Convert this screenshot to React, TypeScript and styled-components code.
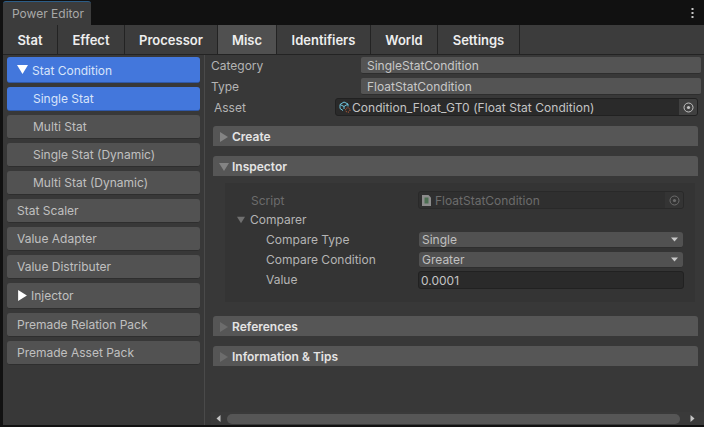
import styled, { createGlobalStyle } from "styled-components";

const GlobalStyle = createGlobalStyle`
  html, body {
    margin: 0;
    padding: 0;
    background: #111111;
    overflow: hidden;
  }
  * {
    box-sizing: border-box;
  }
`;

const Window = styled.div`
  display: flex;
  flex-direction: column;
  width: 704px;
  height: 427px;
  padding: 0 0 2px 3px;
  font-family: Inter, "Liberation Sans", sans-serif;
  font-size: 12px;
  line-height: 16px;
  color: #c4c4c4;
  background: #111111;
`;

const TitleBar = styled.div`
  display: flex;
  justify-content: space-between;
  align-items: flex-end;
  height: 25px;
  flex: none;
`;

const TitleTab = styled.div`
  width: 88px;
  height: 24px;
  padding: 4px 0 0 9px;
  color: #a8a8a8;
  background: #3c3c3c;
  border-top: 1px solid #2c5d87;
  border-radius: 3px 3px 0 0;
`;

const MenuDots = styled.svg`
  margin: 0 10px 6px 0;
`;

const Body = styled.div`
  display: flex;
  flex-direction: column;
  flex: 1;
  min-height: 0;
  background: #383838;
`;

const TabBar = styled.div`
  display: flex;
  flex: none;
  height: 30px;
  background: #3c3c3c;
  border-bottom: 1px solid #232323;
`;

const Tab = styled.div<{ $active?: boolean; $width: number }>`
  display: flex;
  align-items: center;
  justify-content: center;
  width: ${p => p.$width}px;
  font-size: 13px;
  font-weight: 600;
  color: #eeeeee;
  background: ${p => (p.$active ? "#505050" : "#3c3c3c")};
  border-right: 1px solid #232323;
`;

const Columns = styled.div`
  display: flex;
  flex: 1;
  min-height: 0;
`;

const Sidebar = styled.div`
  display: flex;
  flex-direction: column;
  flex: none;
  gap: 4px;
  width: 202px;
  padding: 2px 0 0 4px;
  border-right: 1px solid #4a4a4a;
`;

const SideButton = styled.div<{ $selected?: boolean; $tall?: boolean; $child?: boolean }>`
  display: flex;
  align-items: center;
  flex: none;
  gap: 4px;
  width: 193px;
  height: ${p => (p.$tall ? 26 : 24)}px;
  padding-left: ${p => (p.$child ? 26 : 10)}px;
  color: ${p => (p.$selected ? "#d8e4fa" : "#c0c0c0")};
  background: ${p => (p.$selected ? "#4377dc" : "#525252")};
  border-bottom: 1px solid ${p => (p.$selected ? "#2f58a8" : "#2e2e2e")};
  border-radius: 3px;
`;

const ConditionLabel = styled.span`
  padding-top: 2px;
`;

const InjectorLabel = styled.span`
  margin-left: -1px;
`;

const Content = styled.div`
  display: flex;
  flex-direction: column;
  flex: 1;
  min-width: 0;
`;

const Scroller = styled.div`
  display: flex;
  flex-direction: column;
  flex: 1;
  min-height: 0;
  padding: 2px 3px 0 6px;
`;

const NameRow = styled.div`
  display: flex;
  align-items: center;
  height: 17px;
  margin-bottom: 4px;
`;

const RowLabel = styled.div`
  width: 150px;
  flex: none;
  color: #b4b4b4;
`;

const TextField = styled.div`
  flex: 1;
  height: 17px;
  padding: 0 6px;
  line-height: 17px;
  color: #c8c8c8;
  background: #545454;
  border-bottom: 1px solid #2e2e2e;
  border-radius: 2px;
`;

const AssetRow = styled.div`
  display: flex;
  align-items: center;
  height: 18px;
  margin: -1px 3px 0;
`;

const AssetLabel = styled.div`
  width: 121px;
  flex: none;
  padding-top: 2px;
  color: #b4b4b4;
`;

const ObjectField = styled.div<{ $dim?: boolean }>`
  display: flex;
  align-items: center;
  flex: 1;
  height: 18px;
  padding-left: 3px;
  gap: 1px;
  color: ${p => (p.$dim ? "#6c6c6c" : "#c4c4c4")};
  background: ${p => (p.$dim ? "#2f2f2f" : "#2a2a2a")};
  border: 1px solid ${p => (p.$dim ? "#292929" : "#212121")};
  border-radius: 3px;
`;

const ObjectName = styled.span<{ $dim?: boolean }>`
  flex: 1;
  white-space: nowrap;
  padding-top: 2px;
  letter-spacing: ${p => (p.$dim ? "0" : "0.05px")};
  padding-left: ${p => (p.$dim ? "3px" : "0")};
`;

const PickerButton = styled.div<{ $dim?: boolean }>`
  display: flex;
  align-items: center;
  justify-content: center;
  flex: none;
  width: 18px;
  height: 16px;
  background: ${p => (p.$dim ? "#343434" : "#404040")};
  border-radius: 0 2px 2px 0;
`;

const Foldout = styled.div<{ $top: number }>`
  display: flex;
  align-items: center;
  flex: none;
  gap: 3px;
  height: 20px;
  margin: ${p => p.$top}px 3px 0 2px;
  padding: 2px 0 0 6px;
  font-weight: 600;
  color: #e4e4e4;
  background: #565656;
  border-radius: 3px 3px 0 0;
`;

const InspectorBox = styled.div`
  display: flex;
  flex-direction: column;
  height: 119px;
  margin: 7px 6px 0 14px;
  padding: 8px 11px 0 0;
  background: #343434;
`;

const ScriptRow = styled.div`
  display: flex;
  align-items: center;
  height: 18px;
`;

const ScriptLabel = styled.div`
  width: 193px;
  flex: none;
  padding: 2px 0 0 26px;
  color: #6c6c6c;
`;

const ComparerRow = styled.div`
  display: flex;
  align-items: center;
  gap: 5px;
  height: 16px;
  margin-top: 3px;
  margin-bottom: 2px;
  padding-left: 12px;
  color: #b4b4b4;
`;

const PropertyRow = styled.div`
  display: flex;
  align-items: center;
  height: 20px;
`;

const PropertyLabel = styled.div`
  width: 194px;
  flex: none;
  padding-left: 41px;
  color: #b4b4b4;
`;

const Dropdown = styled.div`
  display: flex;
  align-items: center;
  justify-content: space-between;
  flex: 1;
  height: 16px;
  margin-right: 1px;
  padding: 0 5px 0 3px;
  color: #c0c0c0;
  background: #515151;
  border-bottom: 1px solid #2e2e2e;
  border-radius: 3px;
`;

const NumberField = styled.div`
  flex: 1;
  height: 18px;
  margin-left: -1px;
  padding-left: 2px;
  line-height: 17px;
  color: #c4c4c4;
  background: #2a2a2a;
  border: 1px solid #212121;
  border-radius: 3px;
`;

const ScrollBar = styled.div`
  display: flex;
  align-items: center;
  flex: none;
  height: 13px;
  margin-left: 6px;
  padding: 0 8px 0 4px;
  background: #3a3a3a;
`;

const ThumbTrack = styled.div`
  flex: 1;
  height: 10px;
  margin: 0 9px 0 5px;
  background: #565656;
  border-radius: 5px;
`;

const tabs = [
  { name: "Stat", width: 55 },
  { name: "Effect", width: 67 },
  { name: "Processor", width: 93 },
  { name: "Misc", width: 59, active: true },
  { name: "Identifiers", width: 94 },
  { name: "World", width: 67 },
  { name: "Settings", width: 82 },
];

function Arrow({ dir, color, size }: { dir: "right" | "down"; color: string; size: number }) {
  const points = {
    right: "1,0 9,5 1,10",
    down: "0,1 10,1 5,9",
  };
  return (
    <svg width={size} height={size} viewBox="0 0 10 10">
      <polygon points={points[dir]} fill={color} />
    </svg>
  );
}

function ScrollArrow({ dir }: { dir: "left" | "right" }) {
  return (
    <svg width="7" height="7" viewBox="0 0 7 7">
      <polygon points={dir === "left" ? "5.5,0 1.5,3.5 5.5,7" : "1.5,0 5.5,3.5 1.5,7"} fill="#c4c4c4" />
    </svg>
  );
}

function PickerIcon({ color }: { color: string }) {
  return (
    <svg width="11" height="11" viewBox="0 0 11 11" fill="none">
      <circle cx="5.5" cy="5.5" r="4.5" stroke={color} strokeWidth="1" />
      <circle cx="5.5" cy="5.5" r="1.6" fill={color} />
    </svg>
  );
}

function DropArrow() {
  return (
    <svg width="7" height="5" viewBox="0 0 7 5">
      <polygon points="0,0.5 7,0.5 3.5,4.5" fill="#c8c8c8" />
    </svg>
  );
}

function AssetIcon() {
  return (
    <svg width="12" height="12" viewBox="0 0 12 12" fill="none">
      <path d="M1 3.5 L5 1 L9 3 V5.5 M1 3.5 V7.5 L4 9.5 M1 3.5 L5 5.5 L9 3 M5 5.5 V8" stroke="#6fc4dc" strokeWidth="1" />
      <circle cx="8.8" cy="9" r="2.2" stroke="#d8693c" strokeWidth="1" strokeDasharray="1 1" />
    </svg>
  );
}

function ScriptIcon() {
  return (
    <svg width="9" height="11" viewBox="0 0 9 11">
      <path d="M0 0 H6.5 L9 2.5 V11 H0 Z" fill="#8c8c8c" />
      <rect x="2.5" y="2.5" width="4" height="6" fill="#4c6e52" />
    </svg>
  );
}

export default function App() {
  return (
    <Window>
      <GlobalStyle />
      <TitleBar>
        <TitleTab>Power Editor</TitleTab>
        <MenuDots width="3" height="11" viewBox="0 0 3 11">
          <rect x="0.5" y="0" width="2" height="2" fill="#c8c8c8" />
          <rect x="0.5" y="4" width="2" height="2" fill="#c8c8c8" />
          <rect x="0.5" y="8" width="2" height="2" fill="#c8c8c8" />
        </MenuDots>
      </TitleBar>
      <Body>
        <TabBar>
          {tabs.map(tab => (
            <Tab key={tab.name} $width={tab.width} $active={tab.active}>
              {tab.name}
            </Tab>
          ))}
        </TabBar>
        <Columns>
          <Sidebar>
            <SideButton $selected $tall>
              <Arrow dir="down" color="#ffffff" size={11} />
              <ConditionLabel>Stat Condition</ConditionLabel>
            </SideButton>
            <SideButton $selected $child>Single Stat</SideButton>
            <SideButton $child>Multi Stat</SideButton>
            <SideButton $child>Single Stat (Dynamic)</SideButton>
            <SideButton $child>Multi Stat (Dynamic)</SideButton>
            <SideButton>Stat Scaler</SideButton>
            <SideButton>Value Adapter</SideButton>
            <SideButton>Value Distributer</SideButton>
            <SideButton $tall>
              <Arrow dir="right" color="#ffffff" size={11} />
              <InjectorLabel>Injector</InjectorLabel>
            </SideButton>
            <SideButton>Premade Relation Pack</SideButton>
            <SideButton>Premade Asset Pack</SideButton>
          </Sidebar>
          <Content>
            <Scroller>
              <NameRow>
                <RowLabel>Category</RowLabel>
                <TextField>SingleStatCondition</TextField>
              </NameRow>
              <NameRow>
                <RowLabel>Type</RowLabel>
                <TextField>FloatStatCondition</TextField>
              </NameRow>
              <AssetRow>
                <AssetLabel>Asset</AssetLabel>
                <ObjectField>
                  <AssetIcon />
                  <ObjectName>Condition_Float_GT0 (Float Stat Condition)</ObjectName>
                  <PickerButton>
                    <PickerIcon color="#c4c4c4" />
                  </PickerButton>
                </ObjectField>
              </AssetRow>
              <Foldout $top={10}>
                <Arrow dir="right" color="#848484" size={10} />
                Create
              </Foldout>
              <Foldout $top={10}>
                <Arrow dir="down" color="#848484" size={10} />
                Inspector
              </Foldout>
              <InspectorBox>
                <ScriptRow>
                  <ScriptLabel>Script</ScriptLabel>
                  <ObjectField $dim>
                    <ScriptIcon />
                    <ObjectName $dim>FloatStatCondition</ObjectName>
                    <PickerButton $dim>
                      <PickerIcon color="#6c6c6c" />
                    </PickerButton>
                  </ObjectField>
                </ScriptRow>
                <ComparerRow>
                  <Arrow dir="down" color="#707070" size={8} />
                  Comparer
                </ComparerRow>
                <PropertyRow>
                  <PropertyLabel>Compare Type</PropertyLabel>
                  <Dropdown>
                    Single
                    <DropArrow />
                  </Dropdown>
                </PropertyRow>
                <PropertyRow>
                  <PropertyLabel>Compare Condition</PropertyLabel>
                  <Dropdown>
                    Greater
                    <DropArrow />
                  </Dropdown>
                </PropertyRow>
                <PropertyRow>
                  <PropertyLabel>Value</PropertyLabel>
                  <NumberField>0.0001</NumberField>
                </PropertyRow>
              </InspectorBox>
              <Foldout $top={14}>
                <Arrow dir="right" color="#6c6c6c" size={10} />
                References
              </Foldout>
              <Foldout $top={10}>
                <Arrow dir="right" color="#6c6c6c" size={10} />
                Information &amp; Tips
              </Foldout>
            </Scroller>
            <ScrollBar>
              <ScrollArrow dir="left" />
              <ThumbTrack />
              <ScrollArrow dir="right" />
            </ScrollBar>
          </Content>
        </Columns>
      </Body>
    </Window>
  );
}
